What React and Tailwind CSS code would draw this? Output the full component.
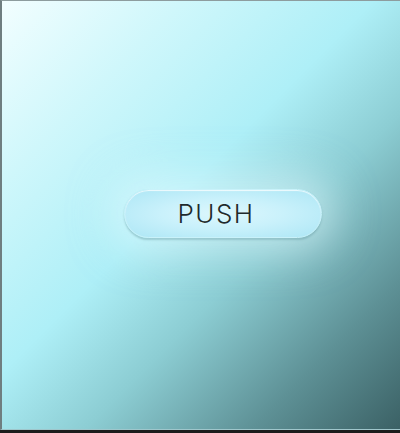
export default function App() {
    return (
        <div className="w-[400px] h-[433px] bg-[#1c1c1c] flex flex-col">
            {/* Stage */}
            <div className="h-[430px] w-full border-t border-l-2 border-t-[#8d9c9e] border-l-[#6f7e80] border-b border-b-[#9fc6cb] bg-[linear-gradient(135deg,#f2feff_0%,#cff7fb_22%,#aeeff7_45%,#8ccdd3_62%,#5e9196_82%,#3b6165_100%)] flex items-center justify-center">
                <div className="pl-[44px] mb-[3px]">
                    <button className="w-[198px] h-[49px] rounded-full border border-[#c9f2fa] bg-[radial-gradient(ellipse_at_center,#ddf7fd_0%,#c9f1fb_45%,#ace6f5_100%)] shadow-[0_0_40px_14px_rgba(235,252,255,0.5),0_2px_2px_rgba(40,110,120,0.45),inset_0_1px_1px_rgba(255,255,255,0.8)] flex items-center justify-center">
                        <span className="font-['Inter','Open_Sans',sans-serif] font-light text-[26px] tracking-[1.5px] text-[#1f2a2c] leading-none pr-[14px]">
                            PUSH
                        </span>
                    </button>
                </div>
            </div>
        </div>
    );
}
